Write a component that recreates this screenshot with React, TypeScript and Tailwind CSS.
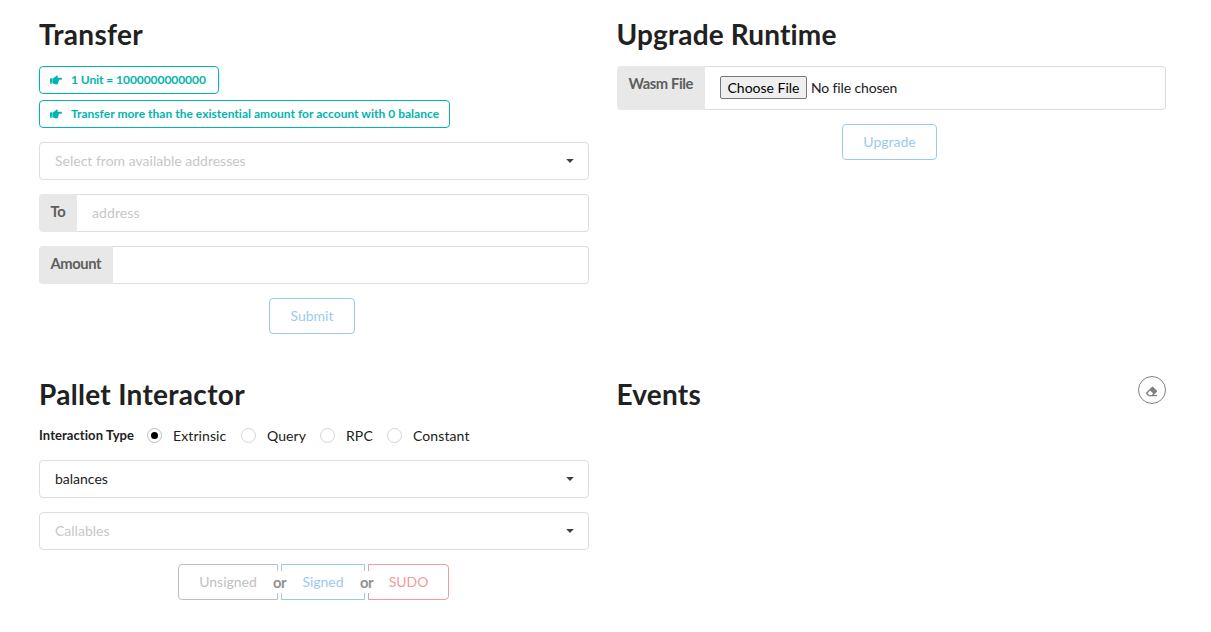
import { useState, type ReactNode } from "react";
import { FaHandPointRight, FaEraser } from "react-icons/fa";

function Heading({ children, tracking }: { children: ReactNode; tracking: string }) {
  return <h1 className={`-mt-px h-9 text-[28px] leading-9 font-bold text-[#212121] ${tracking}`}>{children}</h1>;
}

function Tag({ children, width }: { children: ReactNode; width: string }) {
  return (
    <div
      className={`flex h-7 items-center rounded border border-[#00b5ad] pl-[10px] text-[12px] leading-3 font-bold whitespace-nowrap text-[#00b5ad] ${width}`}
    >
      <FaHandPointRight className="mr-[9px] h-3 w-3 shrink-0" />
      {children}
    </div>
  );
}

function Dropdown({ text, selected = false }: { text: string; selected?: boolean }) {
  return (
    <div className="flex h-[38px] items-center justify-between rounded border border-[#dededf] pr-[14px] pl-[15px]">
      <span className={selected ? "text-[#212121]" : "text-[#c7c7c7]"}>{text}</span>
      <svg className="h-2 w-2" viewBox="0 0 8 8">
        <path d="M0.2 2h7.6L4 6z" fill="#404040" />
      </svg>
    </div>
  );
}

function Field({
  label,
  height,
  labelWidth,
  children,
}: {
  label: string;
  height: string;
  labelWidth: string;
  children?: ReactNode;
}) {
  return (
    <div className={`flex ${height}`}>
      <div
        className={`shrink-0 rounded-l bg-[#e8e8e8] pt-[10px] pl-[11.5px] text-[14.75px] leading-[14px] font-bold tracking-[-0.4px] whitespace-nowrap text-[#5e5e5e] ${labelWidth}`}
      >
        {label}
      </div>
      <div className="flex flex-1 items-center rounded-r border border-l-0 border-[#dededf] pl-[15px]">
        {children}
      </div>
    </div>
  );
}

function ActionButton({ children, width }: { children: ReactNode; width: string }) {
  return (
    <button
      className={`mx-auto mt-[14px] block h-9 rounded border border-[#9bcaec] text-center leading-[14px] text-[#9bcaec] ${width}`}
    >
      {children}
    </button>
  );
}

const kinds = [
  { name: "Extrinsic", width: "w-[94px]" },
  { name: "Query", width: "w-[79px]" },
  { name: "RPC", width: "w-[67px]" },
  { name: "Constant", width: "w-[90px]" },
];

function Or() {
  return (
    <div className="relative w-[3px]">
      <span className="absolute top-[7px] -left-[9px] h-[22px] w-[21px] bg-white text-center text-[14.75px] leading-[22px] font-bold tracking-[-0.4px] text-[#919191]">
        or
      </span>
    </div>
  );
}

export default function App() {
  const [kind, setKind] = useState("Extrinsic");
  return (
    <main className="grid h-[632px] grid-cols-[550px_549px] grid-rows-[360px_auto] gap-x-7 overflow-hidden bg-white pt-[17px] pl-[39px] font-['Lato',sans-serif] text-[14px] leading-5 text-[#212121]">
      <section>
        <Heading tracking="tracking-[0.3px]">Transfer</Heading>
        <div className="mt-[14px] mb-[14px] flex flex-col gap-[6px]">
          <Tag width="w-[180px]">
            <span className="tracking-[-0.06px]">1 Unit = 1000000000000</span>
          </Tag>
          <Tag width="w-[411px]">
            <span className="tracking-[0.02px]">Transfer more than the existential amount for account with 0 balance</span>
          </Tag>
        </div>
        <div className="flex flex-col gap-[14px]">
          <Dropdown text="Select from available addresses" />
          <Field label="To" height="h-[38px]" labelWidth="w-[38px]">
            <span className="tracking-[0.1px] text-[#c7c7c7]">address</span>
          </Field>
          <Field label="Amount" height="h-[38px]" labelWidth="w-[74px]" />
        </div>
        <div className="pr-1">
          <ActionButton width="w-[86px]">Submit</ActionButton>
        </div>
      </section>

      <section>
        <Heading tracking="-ml-[0.5px] tracking-[0.14px]">Upgrade Runtime</Heading>
        <div className="mt-[14px]">
          <Field label="Wasm File" height="h-11" labelWidth="w-[88px]">
            <span className="-mt-px mr-[4px] flex h-[23px] w-[87px] items-center justify-center rounded-[2px] border border-[#767676] bg-[#efefef] whitespace-nowrap text-black">
              Choose File
            </span>
            <span className="tracking-[-0.14px]">No file chosen</span>
          </Field>
        </div>
        <div className="pr-1">
          <ActionButton width="w-[95px]">Upgrade</ActionButton>
        </div>
      </section>

      <section>
        <Heading tracking="tracking-[0.3px]">Pallet Interactor</Heading>
        <div className="mt-[13px] flex h-[22px] items-center">
          <span className="-mt-[2px] w-[108px] text-[13px] leading-5 font-bold tracking-[0.07px]">Interaction Type</span>
          {kinds.map(({ name, width }) => (
            <label key={name} className={`-mt-px flex items-center ${width}`} onClick={() => setKind(name)}>
              <span
                className={`mr-[11px] flex h-[15px] w-[15px] shrink-0 items-center justify-center rounded-full border ${
                  kind === name ? "border-[#bcbdbd]" : "border-[#d4d4d5]"
                }`}
              >
                {kind === name && <span className="h-[7px] w-[7px] rounded-full bg-black" />}
              </span>
              <span className="tracking-[0.1px]">{name}</span>
            </label>
          ))}
        </div>
        <div className="mt-[13px] flex flex-col gap-[14px]">
          <Dropdown text="balances" selected />
          <Dropdown text="Callables" />
        </div>
        <div className="mt-[14px] ml-[139px] flex h-9">
          <button className="w-[100px] rounded-l border border-[#bfbfbf] text-[#bfbfbf]">Unsigned</button>
          <Or />
          <button className="w-[84px] border border-[#9bcaec] text-[#9bcaec]">Signed</button>
          <Or />
          <button className="w-[81px] rounded-r border border-[#f19b9b] text-[#f19b9b]">SUDO</button>
        </div>
      </section>

      <section className="flex items-start justify-between">
        <Heading tracking="-ml-[0.5px] tracking-[0.2px]">Events</Heading>
        <button
          aria-label="Clear events"
          className="-mt-px flex h-7 w-7 items-center justify-center rounded-full border border-[#808080] pt-[2px] pr-px text-[#808080]"
        >
          <FaEraser className="h-[11px] w-[11px]" />
        </button>
      </section>
    </main>
  );
}
